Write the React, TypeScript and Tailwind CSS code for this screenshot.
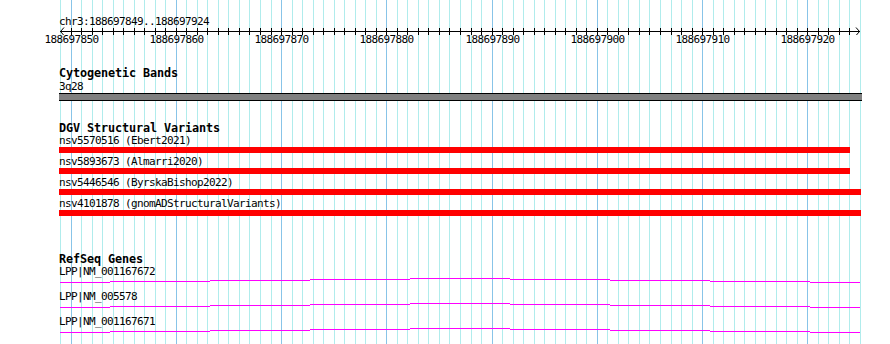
import React from "react";

const START = 188697849;
const N = 76; // bases shown (849..925)
const gx = (i: number) => Math.round(60 + (i * 800) / N);

const svTracks = [
  { name: "nsv5570516 (Ebert2021)", w: 791 },
  { name: "nsv5893673 (Almarri2020)", w: 791 },
  { name: "nsv5446546 (ByrskaBishop2022)", w: 802 },
  { name: "nsv4101878 (gnomADStructuralVariants)", w: 802 },
];

const genes = ["LPP|NM_001167672", "LPP|NM_005578", "LPP|NM_001167671"];

// screen x0, x1, y offset from the line top (transcript drawn slightly bowed)
const geneSegs: [number, number, number][] = [
  [60, 110, 4],
  [110, 210, 3],
  [210, 310, 2],
  [310, 410, 1],
  [410, 510, 0],
  [510, 610, 1],
  [610, 710, 2],
  [710, 810, 3],
  [810, 860, 4],
];

const Grid = () => (
  <svg className="absolute inset-0" width={890} height={344} shapeRendering="crispEdges">
    {Array.from({ length: N + 1 }, (_, i) => {
      const major = (START + i) % 10 === 0;
      return (
        <rect
          key={i}
          x={gx(i)}
          y={0}
          width={1}
          height={344}
          fill={major ? "#88c4e8" : "#b0ecec"}
        />
      );
    })}
  </svg>
);

const Ruler = () => (
  <svg width={803} height={8} className="block" shapeRendering="crispEdges">
    <rect x={1} y={4} width={800} height={1} fill="#000" />
    {Array.from({ length: N - 1 }, (_, k) => {
      const i = k + 1;
      return <rect key={i} x={gx(i) - 59} y={1} width={1} height={7} fill="#000" />;
    })}
    <polyline points="5,0.5 1.5,4.5 5,8.5" fill="none" stroke="#000" strokeWidth={1} shapeRendering="auto" />
    <polyline points="797,0.5 800.5,4.5 797,8.5" fill="none" stroke="#000" strokeWidth={1} shapeRendering="auto" />
  </svg>
);

const RulerLabels = () => (
  <div className="relative h-[10px]">
    {Array.from({ length: 8 }, (_, k) => {
      const i = 1 + k * 10;
      return (
        <span
          key={k}
          className="absolute top-0 -translate-x-1/2 whitespace-nowrap"
          style={{ left: gx(i) - 59 + 0.5 }}
        >
          {START + i}
        </span>
      );
    })}
  </div>
);

const GeneLine = () => (
  <svg width={803} height={15} className="block" shapeRendering="crispEdges">
    {geneSegs.map(([a, b, y], i) => (
      <rect key={i} x={a - 59} y={1 + y} width={b - a} height={1} fill="#ff00ff" />
    ))}
  </svg>
);

const Title = ({ children, className }: { children: React.ReactNode; className: string }) => (
  <div className={"font-bold text-[11.8px] tracking-[-0.1px] leading-[12px] h-[12px] " + className}>
    {children}
  </div>
);

export default function App() {
  return (
    <div className="relative w-[890px] h-[344px] overflow-hidden bg-white text-black font-['DejaVu_Sans_Mono',monospace] text-[11px] tracking-[-0.62px] leading-[10px]">
      <Grid />
      <div className="relative pl-[59px]">
        <div className="pt-[17px] h-[27px]">chr3:188697849..188697924</div>
        <Ruler />
        <RulerLabels />

        <Title className="mt-[22px]">Cytogenetic Bands</Title>
        <div className="mt-[3px] h-[10px]">3q28</div>
        <div className="mt-[1px] h-[8px] w-[803px] bg-[#808080] border-y border-black" />

        <Title className="mt-[21px]">DGV Structural Variants</Title>
        <div className="flex flex-col pt-[2px]">
          {svTracks.map((t, i) => (
            <div key={i} className="flex flex-col pb-[4px]">
              <div className="h-[10px] whitespace-nowrap">{t.name}</div>
              <div className="mt-[1px] h-[6px] bg-[#ff0000]" style={{ width: t.w }} />
            </div>
          ))}
        </div>

        <Title className="mt-[33px]">RefSeq Genes</Title>
        <div className="flex flex-col pt-[2px]">
          {genes.map((g) => (
            <div key={g} className="flex flex-col">
              <div className="h-[10px]">{g}</div>
              <GeneLine />
            </div>
          ))}
        </div>
      </div>
    </div>
  );
}
